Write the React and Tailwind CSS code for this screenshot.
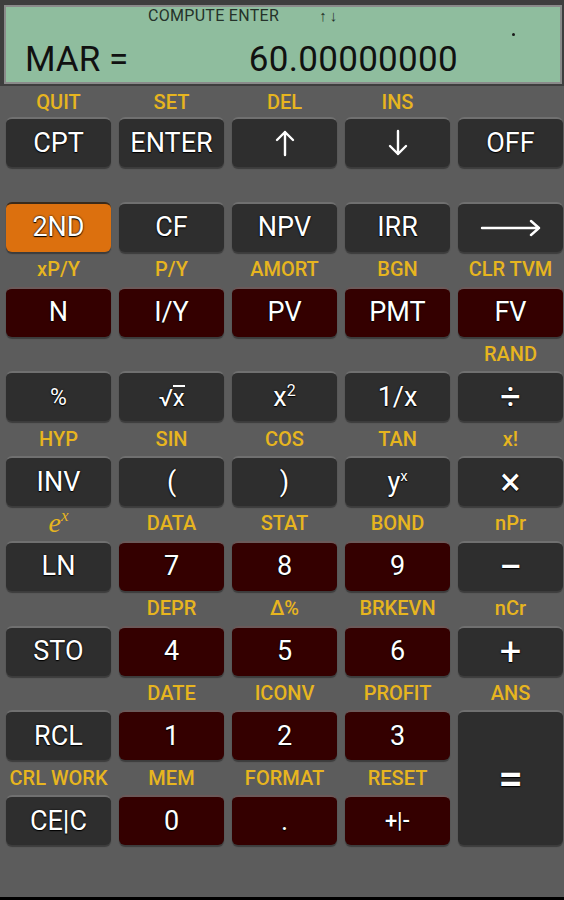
import React from 'react'

const FONT = { fontFamily: 'Roboto, "Liberation Sans", sans-serif' }

function Key({ children, tone = 'dark', className = '' }) {
  const bg =
    tone === 'red'
      ? 'bg-[#340000] border-t-[#6b5a5a]'
      : tone === 'orange'
      ? 'bg-[#dc700e] border-t-[#3a2a1a]'
      : 'bg-[#2e2e2e] border-t-[#707070]'
  return (
    <div
      className={`${bg} border-t-2 rounded-[6px] shadow-[0_2px_1px_rgba(0,0,0,0.35)] flex items-center justify-center text-white text-[27px] leading-none [text-shadow:0_0_2px_#000,0_1px_1px_#000] ${className}`}
    >
      {children}
    </div>
  )
}

function Label({ children }) {
  return (
    <div className="flex items-center justify-center text-[20px] font-medium leading-none text-[#e7b51f] whitespace-nowrap">
      {children}
    </div>
  )
}

const UpArrow = () => (
  <svg width="22" height="28" viewBox="0 0 22 28" fill="none" stroke="white" strokeWidth="2.4" strokeLinecap="round" strokeLinejoin="round">
    <path d="M11 3v23M3 11l8-8 8 8" />
  </svg>
)

const DownArrow = () => (
  <svg width="22" height="28" viewBox="0 0 22 28" fill="none" stroke="white" strokeWidth="2.4" strokeLinecap="round" strokeLinejoin="round">
    <path d="M11 2v23M3 17l8 8 8-8" />
  </svg>
)

const LongArrow = () => (
  <svg width="62" height="18" viewBox="0 0 62 18" fill="none" stroke="white" strokeWidth="2.4" strokeLinecap="round" strokeLinejoin="round">
    <path d="M2 9h57M51 2l8 7-8 7" />
  </svg>
)

// each row: [labels], [keys]
const rows = [
  [
    ['QUIT', 'SET', 'DEL', 'INS', ''],
    [['CPT'], ['ENTER'], [<UpArrow />], [<DownArrow />], ['OFF']],
  ],
  [
    ['', '', '', '', ''],
    [['2ND', 'orange'], ['CF'], ['NPV'], ['IRR'], [<LongArrow />]],
  ],
  [
    ['xP/Y', 'P/Y', 'AMORT', 'BGN', 'CLR TVM'],
    [['N', 'red'], ['I/Y', 'red'], ['PV', 'red'], ['PMT', 'red'], ['FV', 'red']],
  ],
  [
    ['', '', '', '', 'RAND'],
    [
      [<span className="text-[23px]">%</span>],
      [
        <span className="flex items-end text-[24px]">
          <span>√</span>
          <span className="border-t-2 border-white leading-[0.95]">x</span>
        </span>,
      ],
      [<span>x<sup className="text-[16px] -top-[10px]">2</sup></span>],
      ['1/x'],
      [<span className="text-[36px]">÷</span>],
    ],
  ],
  [
    ['HYP', 'SIN', 'COS', 'TAN', 'x!'],
    [['INV'], ['('], [')'], [<span>y<sup className="text-[15px] -top-[10px]">x</sup></span>], [<span className="text-[38px]">×</span>]],
  ],
  [
    [
      <span className="italic font-normal text-[28px]" style={{ fontFamily: '"Liberation Serif", serif' }}>
        e<sup className="text-[17px] -top-[11px]">x</sup>
      </span>,
      'DATA',
      'STAT',
      'BOND',
      'nPr',
    ],
    [['LN'], ['7', 'red'], ['8', 'red'], ['9', 'red'], [<span className="text-[42px]">−</span>]],
  ],
  [
    ['', 'DEPR', 'Δ%', 'BRKEVN', 'nCr'],
    [['STO'], ['4', 'red'], ['5', 'red'], ['6', 'red'], [<span className="text-[38px]">+</span>]],
  ],
  [
    ['', 'DATE', 'ICONV', 'PROFIT', 'ANS'],
    [['RCL'], ['1', 'red'], ['2', 'red'], ['3', 'red']],
  ],
  [
    ['CRL WORK', 'MEM', 'FORMAT', 'RESET'],
    [['CE|C'], ['0', 'red'], ['.', 'red'], [<span className="text-[22px] font-medium">+|-</span>, 'red']],
  ],
]

export default function App() {
  return (
    <div className="w-[564px] h-[900px] bg-[#5c5c5c] flex flex-col overflow-hidden" style={FONT}>
      {/* display */}
      <div className="h-[86px] bg-[#3e3e3e] pt-[5px] pl-[4px] pr-[2px] pb-[2px]">
        <div className="h-full border-2 border-[#8a8a8a] bg-[#8fbd9e] relative flex flex-col">
          <div className="flex items-center h-[18px] pl-[142px] text-[16px] leading-none text-[#25322a]">
            <span className="tracking-[0.3px]">COMPUTE ENTER</span>
            <span className="ml-[40px] text-[15px] font-bold tracking-[3px]">↑↓</span>
          </div>
          <span className="absolute left-[506px] top-[26px] w-[3px] h-[3px] rounded-full bg-[#1a1a1a]" />
          <div className="flex items-center flex-1 pt-[12px] pl-[19px] pr-[102px] text-[35px] leading-none text-[#111]">
            <span>MAR =</span>
            <span className="ml-auto tracking-[0.3px]">60.00000000</span>
          </div>
        </div>
      </div>

      {/* keypad */}
      <div className="grid grid-cols-[repeat(5,105px)] grid-rows-[31px_50px_repeat(8,34.75px_50px)] gap-x-[8px] pl-[6px]">
        {rows.map(([labels, keys], r) => (
          <React.Fragment key={r}>
            {labels.map((l, i) => (
              <Label key={`l${r}-${i}`}>{l}</Label>
            ))}
            {keys.map(([content, tone], i) => (
              <Key key={`k${r}-${i}`} tone={tone}>
                {content}
              </Key>
            ))}
            {r === 7 && (
              <Key className="row-span-3 text-[44px] font-medium">=</Key>
            )}
          </React.Fragment>
        ))}
      </div>

      <div className="mt-auto h-[3px] bg-black" />
    </div>
  )
}
